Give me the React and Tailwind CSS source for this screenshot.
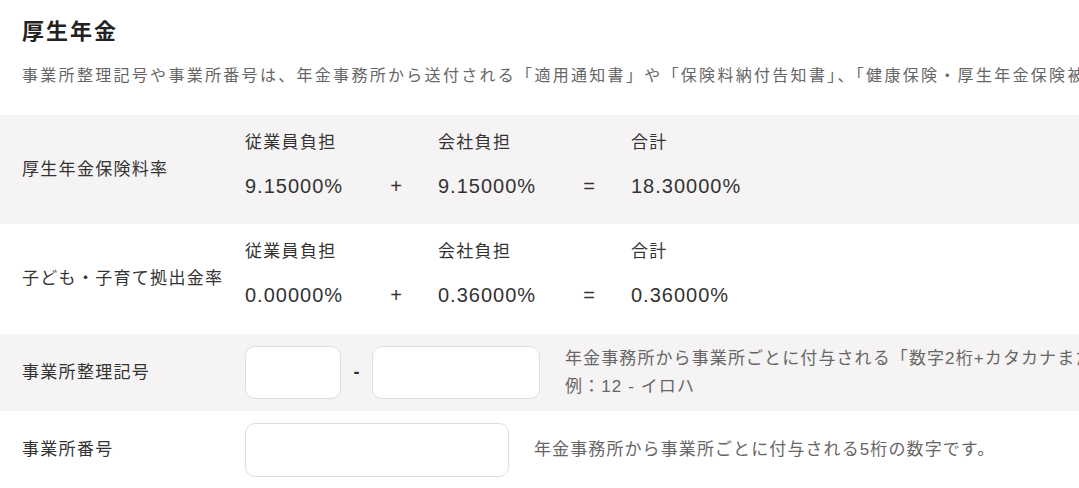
const font = { fontFamily: '"Liberation Sans", "Noto Sans CJK JP", sans-serif' };

function RateRow({ label, employee, company, total, shaded }) {
  return (
    <div className={`flex ${shaded ? 'bg-[#f5f3f3]' : 'bg-white'}`}>
      <div className="w-[245px] shrink-0 pl-[22px] flex items-center text-[17px] tracking-[1.3px] text-[#333]">
        {label}
      </div>
      <div className="flex items-end pt-[16px] pb-[24px] text-[#333]">
        <div className="w-[136px]">
          <div className="text-[17px] leading-[24px] tracking-[1.3px]">従業員負担</div>
          <div className="mt-[17px] text-[20px] leading-[28px] tracking-[1px]">{employee}</div>
        </div>
        <div className="w-[30px] mr-[27px] text-center text-[20px] leading-[28px]">+</div>
        <div className="w-[136px]">
          <div className="text-[17px] leading-[24px] tracking-[1.3px]">会社負担</div>
          <div className="mt-[17px] text-[20px] leading-[28px] tracking-[1px]">{company}</div>
        </div>
        <div className="w-[30px] mr-[27px] text-center text-[20px] leading-[28px]">=</div>
        <div className="w-[160px]">
          <div className="text-[17px] leading-[24px] tracking-[1.3px]">合計</div>
          <div className="mt-[17px] text-[20px] leading-[28px] tracking-[1px]">{total}</div>
        </div>
      </div>
    </div>
  );
}

export default function App() {
  return (
    <div className="w-[1079px] h-[488px] overflow-hidden bg-white" style={font}>
      <div className="px-[22px] pt-[20px]">
        <h2 className="text-[22px] leading-[24px] font-bold tracking-[2px] text-[#222]">厚生年金</h2>
        <p className="mt-[20px] mb-[27px] text-[16px] leading-[24px] tracking-[2.3px] text-[#666] whitespace-nowrap">
          事業所整理記号や事業所番号は、年金事務所から送付される「適用通知書」や「保険料納付告知書」、「健康保険・厚生年金保険被保険者資格取得確認および標準報酬決定通知書」に記載されています。
        </p>
      </div>

      <RateRow label="厚生年金保険料率" employee="9.15000%" company="9.15000%" total="18.30000%" shaded />
      <RateRow label="子ども・子育て拠出金率" employee="0.00000%" company="0.36000%" total="0.36000%" />

      <div className="flex items-center h-[77px] mt-px bg-[#f5f3f3]">
        <div className="w-[245px] shrink-0 pl-[22px] text-[17px] tracking-[1.3px] text-[#333]">
          事業所整理記号
        </div>
        <div className="flex items-center">
          <input className="w-[96px] h-[53px] rounded-[10px] border border-[#ddd] bg-white outline-none" />
          <span className="w-[31px] text-center text-[18px] font-bold text-[#333]">-</span>
          <input className="w-[168px] h-[53px] rounded-[10px] border border-[#ddd] bg-white outline-none" />
        </div>
        <div className="ml-[25px] text-[17px] leading-[28px] tracking-[1.1px] text-[#666] whitespace-nowrap">
          <div>年金事務所から事業所ごとに付与される「数字2桁+カタカナまたは英字」の記号です。</div>
          <div>例：12 - イロハ</div>
        </div>
      </div>

      <div className="flex items-center h-[77px] bg-white">
        <div className="w-[245px] shrink-0 pl-[22px] text-[17px] tracking-[1.3px] text-[#333]">
          事業所番号
        </div>
        <input className="w-[264px] h-[54px] rounded-[10px] border border-[#ddd] bg-white outline-none" />
        <div className="ml-[25px] text-[17px] leading-[28px] tracking-[1.1px] text-[#666] whitespace-nowrap">
          年金事務所から事業所ごとに付与される5桁の数字です。
        </div>
      </div>
    </div>
  );
}
